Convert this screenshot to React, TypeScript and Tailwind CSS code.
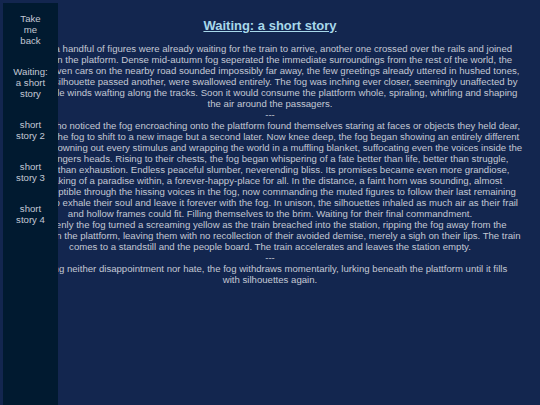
const links = ['Take me back', 'Waiting: a short story', 'short story 2', 'short story 3', 'short story 4']

// story text, broken into the lines the original page shows
const story: string[][] = [
  [
    'While a handful of figures were already waiting for the train to arrive, another one crossed over the rails and joined',
    'them on the platform. Dense mid-autumn fog seperated the immediate surroundings from the rest of the world, the',
    'din of seven cars on the nearby road sounded impossibly far away, the few greetings already uttered in hushed tones,',
    'as one silhouette passed another, were swallowed entirely. The fog was inching ever closer, seemingly unaffected by',
    'the gentle winds wafting along the tracks. Soon it would consume the plattform whole, spiraling, whirling and shaping',
    'the air around the passagers.',
  ],
  ['---'],
  [
    'Those who noticed the fog encroaching onto the plattform found themselves staring at faces or objects they held dear,',
    'only for the fog to shift to a new image but a second later. Now knee deep, the fog began showing an entirely different',
    'scene, drowning out every stimulus and wrapping the world in a muffling blanket, suffocating even the voices inside the',
    'passengers heads. Rising to their chests, the fog began whispering of a fate better than life, better than struggle,',
    'better than exhaustion. Endless peaceful slumber, neverending bliss. Its promises became even more grandiose,',
    'speaking of a paradise within, a forever-happy-place for all. In the distance, a faint horn was sounding, almost',
    'imperceptible through the hissing voices in the fog, now commanding the muted figures to follow their last remaining',
    'breath to exhale their soul and leave it forever with the fog. In unison, the silhouettes inhaled as much air as their frail',
    'and hollow frames could fit. Filling themselves to the brim. Waiting for their final commandment.',
  ],
  [
    'Suddenly the fog turned a screaming yellow as the train breached into the station, ripping the fog away from the',
    'people on the plattform, leaving them with no recollection of their avoided demise, merely a sigh on their lips. The train',
    'comes to a standstill and the people board. The train accelerates and leaves the station empty.',
  ],
  ['---'],
  [
    'Feeling neither disappointment nor hate, the fog withdraws momentarily, lurking beneath the plattform until it fills',
    'with silhouettes again.',
  ],
]

export default function App() {
  return (
    <div className="min-h-screen bg-[#13264f] text-[#c3c8d4]" style={{ fontFamily: '"Liberation Sans", Arial, sans-serif' }}>
      <nav className="fixed left-[3px] top-[3px] bottom-0 w-[55px] bg-[#011a30] pt-[10px] px-[9.5px] flex flex-col gap-[20px] text-[9.6px] leading-[11px] text-center text-[#c3c8d4]">
        {links.map((l) => (
          <a key={l} className="block">{l}</a>
        ))}
      </nav>

      <main className="px-[4px] pt-[18px] text-center text-[9.6px] leading-[11px] whitespace-nowrap">
        <h1 className="text-[13px] leading-[16px] font-bold text-[#a8d8ea] underline mb-[9px]">Waiting: a short story</h1>
        {story.map((para, i) => (
          <p key={i}>
            {para.map((line, j) => (
              <span key={j}>
                {line}
                {j < para.length - 1 && <br />}
              </span>
            ))}
          </p>
        ))}
      </main>
    </div>
  )
}
